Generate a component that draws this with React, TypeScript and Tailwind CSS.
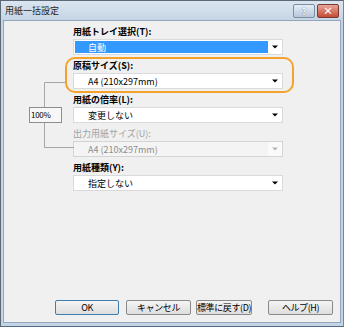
import React from 'react';

const font = { fontFamily: '"Noto Sans CJK JP", "Noto Sans", sans-serif' };

interface SelectProps {
  value: string;
  highlight?: boolean;
  disabled?: boolean;
}

const Select: React.FC<SelectProps> = ({ value, highlight, disabled }) => (
  <div
    className={`h-[16px] w-[210px] flex items-center border ${
      disabled ? 'bg-[#f4f4f4] border-[#d4d4d4]' : 'bg-white border-[#dadada]'
    }`}
  >
    <div
      className={`h-[12px] flex items-center ml-[1px] pl-[13px] flex-1 text-[9px] leading-none ${
        highlight ? 'bg-[#3399ff] text-white' : disabled ? 'text-[#8d8d8d]' : 'text-black'
      }`}
    >
      {value}
    </div>
    <div className={`w-[14px] h-[14px] flex items-center justify-center ${disabled ? 'bg-[#fafafa]' : ''}`}>
      <svg width="6" height="4" viewBox="0 0 6 4">
        <path d="M0 0.5 L6 0.5 L3 3.5 Z" fill={disabled ? '#b4b4b4' : '#000'} />
      </svg>
    </div>
  </div>
);

const Label: React.FC<{ text: string; disabled?: boolean; className?: string }> = ({ text, disabled, className }) => (
  <div
    className={`h-[14px] leading-[14px] text-[9px] ${
      disabled ? 'text-[#a2a2a2]' : 'text-black font-bold'
    } ${className ?? ''}`}
  >
    {text}
  </div>
);

const Btn: React.FC<{ label: string; primary?: boolean; className?: string }> = ({ label, primary, className }) => (
  <button
    className={`h-[15px] rounded-[2px] border text-[9px] leading-none whitespace-nowrap tracking-[-0.4px] text-black bg-gradient-to-b from-[#f4f4f4] to-[#dedede] ${
      primary ? 'border-[#3c7fb1]' : 'border-[#8a8a8a]'
    } ${className ?? ''}`}
  >
    {label}
  </button>
);

export default function App() {
  return (
    <div style={font} className="w-[344px] h-[327px] flex flex-col bg-[#c6d5e5] border border-[#5b6977] border-r-[#3a9bc8] border-b-[#4d6a86]">
      {/* title bar */}
      <div className="h-[19px] flex items-center bg-gradient-to-b from-[#dbe5f0] to-[#c6d5e5]">
        <span className="ml-[4px] text-[9px] text-[#1e1e1e]">用紙一括設定</span>
        <div className="ml-auto flex items-start gap-[2px] mr-[4px] mt-[1px]">
          <div className="w-[22px] h-[14px] rounded-[2px] border border-[#7f8fa3] bg-gradient-to-b from-[#e5edf6] to-[#b7c7da] flex items-center justify-center text-[9px] font-bold text-white leading-none [text-shadow:0_0_1px_#33475e]">
            ?
          </div>
          <div className="w-[22px] h-[14px] rounded-[2px] border border-[#7b3a31] bg-gradient-to-b from-[#e8a497] to-[#c24a36] flex items-center justify-center text-[10px] font-bold text-white leading-none">
            ×
          </div>
        </div>
      </div>

      {/* client area */}
      <div className="flex-1 mx-[2px] mb-[3px] bg-[#f0f0f0] border border-[#93a7bc] flex flex-col">
        <div className="relative flex flex-col pl-[69px] pt-[4px]">
          {/* bracket connecting size and ratio */}
          <svg className="absolute left-0 top-0" width="80" height="140">
            <path d="M40.5 61.5 H62 M40.5 61.5 V126.5 H70" stroke="#a6a6a6" strokeWidth="1" fill="none" />
          </svg>

          <Label text="用紙トレイ選択(T):" />
          <Select value="自動" highlight />

          <div className="relative -ml-[8px] mt-[2px] w-[229px] h-[36px] border-2 border-[#f5a22c] rounded-[10px] pl-[6px]">
            <Label text="原稿サイズ(S):" />
            <Select value="A4 (210x297mm)" />
          </div>

          <Label text="用紙の倍率(L):" />
          <div className="relative flex">
            <div className="absolute -left-[44px] top-0 w-[33px] h-[16px] border border-[#8e8e8e] bg-[#f7f7f7] text-[8px] leading-[14px] pl-[1px] tracking-[-0.3px] text-black">
              100%
            </div>
            <Select value="変更しない" />
          </div>

          <Label text="出力用紙サイズ(U):" disabled className="mt-[4px]" />
          <Select value="A4 (210x297mm)" disabled />

          <Label text="用紙種類(Y):" className="mt-[4px]" />
          <Select value="指定しない" />
        </div>

        <div className="mt-auto mb-[7px] flex items-center pl-[51px]">
          <Btn label="OK" primary className="w-[64px]" />
          <Btn label="キャンセル" className="w-[65px] ml-[7px]" />
          <Btn label="標準に戻す(D)" className="w-[56px] ml-[5px]" />
          <Btn label="ヘルプ(H)" className="w-[65px] ml-[16px]" />
        </div>
      </div>
    </div>
  );
}
